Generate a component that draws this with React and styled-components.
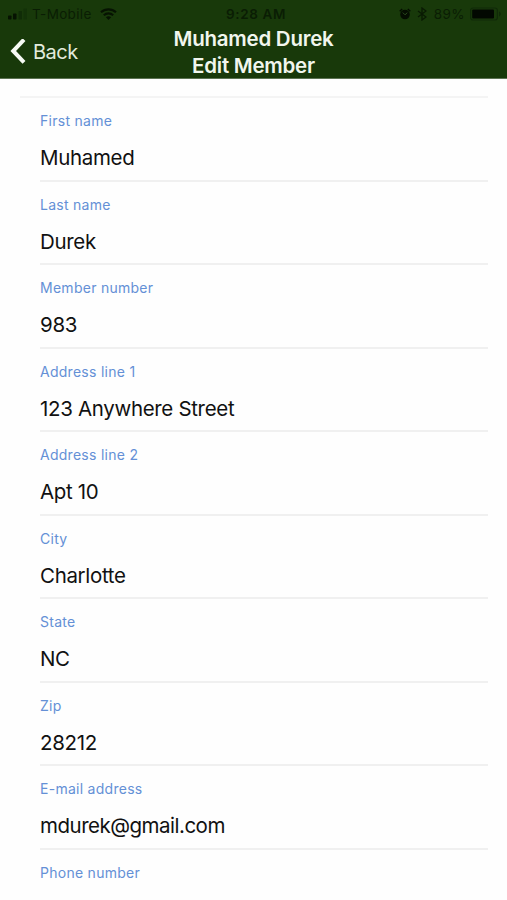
import styled, { createGlobalStyle } from 'styled-components'

const GlobalStyle = createGlobalStyle`
  * {
    box-sizing: border-box;
  }

  body {
    margin: 0;
    background: #fefefe;
    font-family: Inter, "Liberation Sans", sans-serif;
  }
`

const Screen = styled.div`
  width: 507px;
  height: 900px;
  overflow: hidden;
  background: #fefefe;
`

const Header = styled.header`
  height: 79px;
  background: #18390a;
  border-bottom: 1px solid #5c7353;
`

const StatusBar = styled.div`
  display: grid;
  grid-template-columns: 1fr auto 1fr;
  align-items: center;
  height: 26px;
  padding: 1px 5px 0 8px;
  color: #0a1d04;
  font-size: 13.5px;
  line-height: 16px;
`

const StatusGroup = styled.div`
  display: flex;
  align-items: center;
  justify-content: ${props => props.$end ? 'flex-end' : 'flex-start'};

  svg{
    flex: none;
    display: block;
  }

  svg + svg{
    margin-left: 6px;
  }
`

const Carrier = styled.span`
  margin: 0 8px 0 5px;
  letter-spacing: .35px;
`

const Clock = styled.span`
  margin-left: 2px;
  font-weight: 600;
  font-size: 13.5px;
  letter-spacing: .6px;
`

const Percent = styled.span`
  margin: 0 5px 0 7px;
  letter-spacing: .4px;
`

const NavBar = styled.div`
  display: grid;
  grid-template-columns: 1fr auto 1fr;
  height: 52px;
  color: #f1f6ee;
`

const BackButton = styled.button`
  display: flex;
  align-items: center;
  align-self: start;
  gap: 7px;
  height: 51px;
  padding: 0 0 0 10px;
  border: none;
  background: none;
  color: #e2ebdd;
  font: 400 20px/26px Inter, "Liberation Sans", sans-serif;
  letter-spacing: -.5px;

  span{
    padding-top: 1px;
  }
`

const Title = styled.h1`
  margin: -1px 0 0;
  font-size: 20.5px;
  font-weight: 600;
  line-height: 27px;
  letter-spacing: -.25px;
  text-align: center;
`

const Form = styled.form`
  margin: 17px 19px 0 20px;
  border-top: 2px solid #f4f4f4;
`

const Field = styled.label`
  display: flex;
  flex-direction: column;
  height: 83.55px;
  margin-left: 20px;
  padding-top: 13px;
  border-bottom: 2px solid #f0f0f0;
`

const Label = styled.span`
  color: #6490d6;
  font-size: 14px;
  line-height: 20px;
  letter-spacing: .27px;
`

const Value = styled.span`
  margin-top: 13px;
  color: #111;
  font-size: 20.5px;
  line-height: 28px;
  letter-spacing: ${props => props.$email ? '-.5px' : '-.33px'};
`

const fields = [
  { label: 'First name', value: 'Muhamed' },
  { label: 'Last name', value: 'Durek' },
  { label: 'Member number', value: '983' },
  { label: 'Address line 1', value: '123 Anywhere Street' },
  { label: 'Address line 2', value: 'Apt 10' },
  { label: 'City', value: 'Charlotte' },
  { label: 'State', value: 'NC' },
  { label: 'Zip', value: '28212' },
  { label: 'E-mail address', value: 'mdurek@gmail.com', email: true },
  { label: 'Phone number', value: '' },
]

function SignalIcon() {
  return (
    <svg width='19' height='12' viewBox='0 0 19 12'>
      <rect x='0' y='7.5' width='3.5' height='4' rx='.8' fill='#061302' />
      <rect x='5' y='5.5' width='3.5' height='6' rx='.8' fill='#061302' />
      <rect x='10.5' y='3' width='3.5' height='8.5' rx='.8' fill='#102c07' />
      <rect x='15.5' y='.5' width='3.5' height='11' rx='.8' fill='#133208' />
    </svg>
  )
}

function WifiIcon() {
  return (
    <svg width='17' height='12' viewBox='0 0 17 12' fill='none' stroke='#061302' strokeWidth='2.1'>
      <path d='M1 4.3C5.2.4 11.8.4 16 4.3' />
      <path d='M3.8 7.2C6.5 4.7 10.5 4.7 13.2 7.2' />
      <path d='M8.5 12 5.9 9.2C7.4 7.9 9.6 7.9 11.1 9.2Z' fill='#061302' stroke='none' />
    </svg>
  )
}

function AlarmIcon() {
  return (
    <svg width='12' height='12' viewBox='0 0 12 12'>
      <circle cx='6' cy='6.5' r='4.8' fill='#040d01' />
      <path d='M.7 3.3 3.2 1M11.3 3.3 8.8 1' stroke='#040d01' strokeWidth='1.4' />
      <path d='M3.8 4.6 6 6.8 8.3 4.7' fill='none' stroke='#2b4a1e' strokeWidth='1' />
    </svg>
  )
}

function BluetoothIcon() {
  return (
    <svg width='10' height='14' viewBox='0 0 10 14' fill='none' stroke='#091a03' strokeWidth='1.3'>
      <path d='M1 4 9 10 5 13V1L9 4 1 10' />
    </svg>
  )
}

function BatteryIcon() {
  return (
    <svg width='32' height='14' viewBox='0 0 32 14'>
      <rect x='.6' y='1' width='26.8' height='12' rx='2.5' fill='none' stroke='#102a08' strokeWidth='1.2' />
      <rect x='2.2' y='2.6' width='21.8' height='8.8' rx='1' fill='#020801' />
      <path d='M29 4.6C31.4 5.4 31.4 8.6 29 9.4Z' fill='#102a08' />
    </svg>
  )
}

function BackIcon() {
  return (
    <svg width='16' height='26' viewBox='0 0 16 26' fill='none' stroke='#f6faf4' strokeWidth='4'>
      <path d='M14 .6 3.2 12 14 23.4' />
    </svg>
  )
}

function App() {
  return (
    <Screen>
      <GlobalStyle />
      <Header>
        <StatusBar>
          <StatusGroup>
            <SignalIcon />
            <Carrier>T-Mobile</Carrier>
            <WifiIcon />
          </StatusGroup>
          <Clock>9:28 AM</Clock>
          <StatusGroup $end>
            <AlarmIcon />
            <BluetoothIcon />
            <Percent>89%</Percent>
            <BatteryIcon />
          </StatusGroup>
        </StatusBar>
        <NavBar>
          <BackButton type='button'>
            <BackIcon />
            <span>Back</span>
          </BackButton>
          <Title>Muhamed Durek<br />Edit Member</Title>
        </NavBar>
      </Header>
      <Form>
        {fields.map(field => (
          <Field key={field.label}>
            <Label>{field.label}</Label>
            <Value $email={field.email}>{field.value}</Value>
          </Field>
        ))}
      </Form>
    </Screen>
  )
}

export default App
